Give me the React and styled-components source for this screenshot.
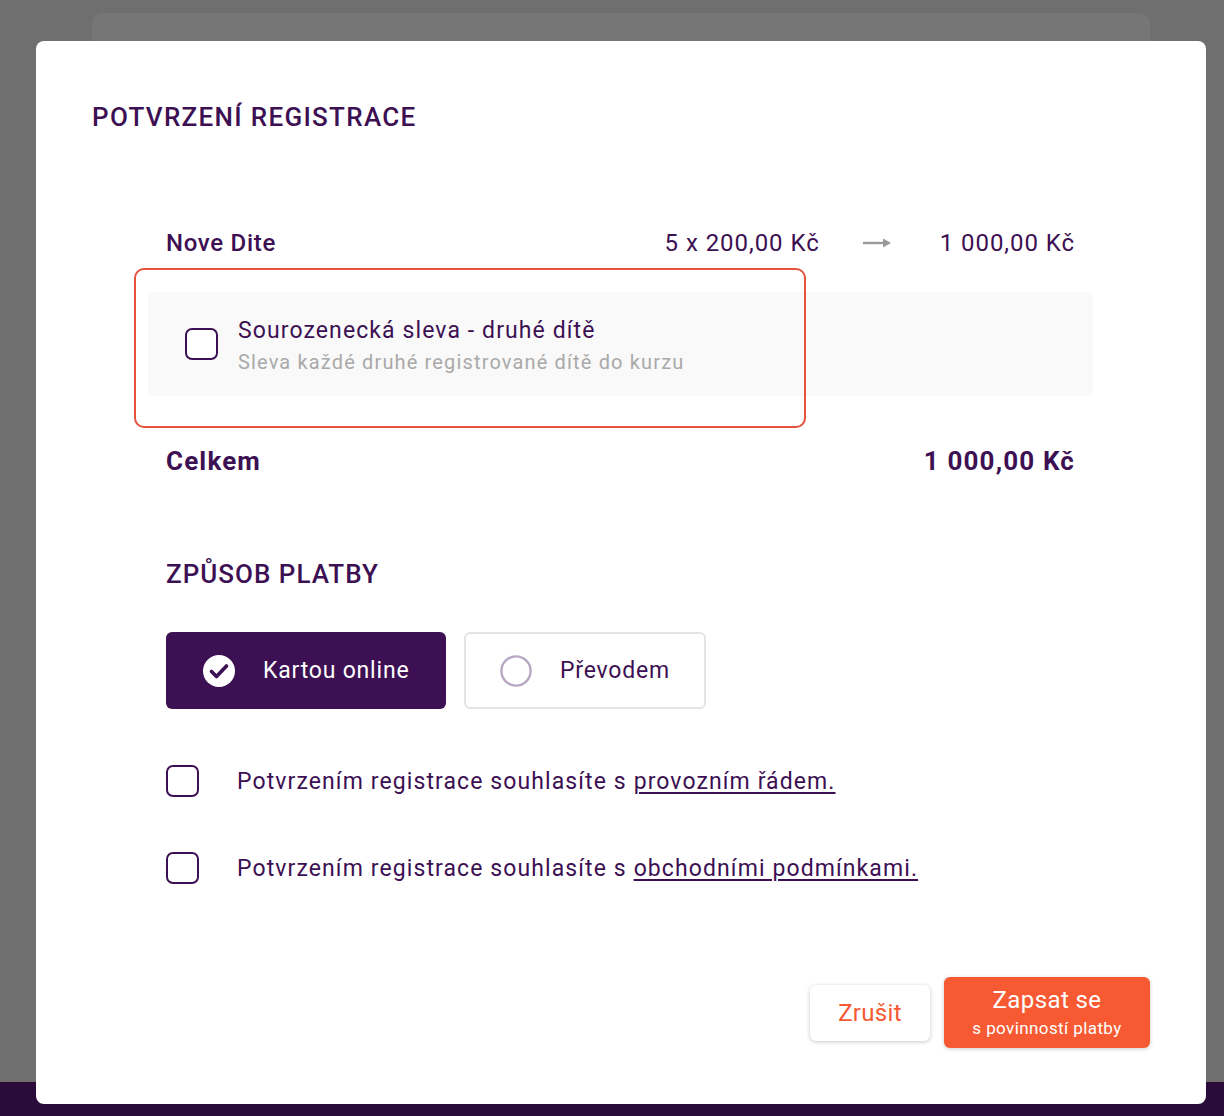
import React from 'react';
import styled, { createGlobalStyle } from 'styled-components';

const GlobalStyle = createGlobalStyle`
    html, body {
        margin: 0;
        padding: 0;
    }
    body {
        font-family: Roboto, "Noto Sans", "Liberation Sans", sans-serif;
        color: #3c1053;
    }
`;

const PURPLE = '#3c1053';
const ORANGE = '#f75a33';

export default function App() {
    return (
        <Page>
            <GlobalStyle />
            <BehindCard />
            <BottomBand />
            <Dialog>
                <Title>POTVRZENÍ REGISTRACE</Title>
                <Body>
                    <LineRow>
                        <ItemName>Nove Dite</ItemName>
                        <ItemCalc>
                            <span>5 x 200,00 Kč</span>
                            <ArrowIcon />
                            <span>1 000,00 Kč</span>
                        </ItemCalc>
                    </LineRow>

                    <DiscountBox>
                        <Highlight />
                        <Checkbox />
                        <DiscountText>
                            <DiscountTitle>Sourozenecká sleva - druhé dítě</DiscountTitle>
                            <DiscountSub>Sleva každé druhé registrované dítě do kurzu</DiscountSub>
                        </DiscountText>
                    </DiscountBox>

                    <TotalRow>
                        <span>Celkem</span>
                        <span>1 000,00 Kč</span>
                    </TotalRow>

                    <SectionTitle>ZPŮSOB PLATBY</SectionTitle>

                    <PaymentRow>
                        <PayOption $active>
                            <CheckCircle />
                            Kartou online
                        </PayOption>
                        <PayOption>
                            <EmptyCircle />
                            Převodem
                        </PayOption>
                    </PaymentRow>

                    <AgreeRow $top={55}>
                        <Checkbox />
                        <AgreeText>
                            Potvrzením registrace souhlasíte s <a href="#">provozním řádem.</a>
                        </AgreeText>
                    </AgreeRow>
                    <AgreeRow $top={53}>
                        <Checkbox />
                        <AgreeText>
                            Potvrzením registrace souhlasíte s <a href="#">obchodními podmínkami.</a>
                        </AgreeText>
                    </AgreeRow>
                </Body>

                <Footer>
                    <CancelButton>Zrušit</CancelButton>
                    <SubmitButton>
                        <span>Zapsat se</span>
                        <small>s povinností platby</small>
                    </SubmitButton>
                </Footer>
            </Dialog>
        </Page>
    );
}

function ArrowIcon() {
    return (
        <ArrowSvg width="30" height="14" viewBox="0 0 30 14">
            <path d="M1 7h24" stroke="#9a9a9a" strokeWidth="2.4" />
            <path d="M21 2.5 29 7l-8 4.5z" fill="#9a9a9a" />
        </ArrowSvg>
    );
}

function CheckCircle() {
    return (
        <IconSvg width="32" height="32" viewBox="0 0 32 32">
            <circle cx="16" cy="16" r="16" fill="#fff" />
            <path d="M8.5 16.5 13.5 21.5 23.5 11" fill="none" stroke={PURPLE} strokeWidth="3.6" strokeLinecap="round" strokeLinejoin="round" />
        </IconSvg>
    );
}

function EmptyCircle() {
    return (
        <IconSvg width="32" height="32" viewBox="0 0 32 32">
            <circle cx="16" cy="16" r="14.6" fill="none" stroke="#b8a8c4" strokeWidth="2.4" />
        </IconSvg>
    );
}

const Page = styled.div`
    position: relative;
    height: 1116px;
    overflow: hidden;
    background: #6f6f6f;
    padding-top: 13px;
    box-sizing: border-box;
`;

const BehindCard = styled.div`
    margin: 0 74px 0 92px;
    height: 1200px;
    background: #767676;
    border-radius: 10px;
`;

const BottomBand = styled.div`
    position: absolute;
    left: 0;
    right: 0;
    bottom: 0;
    height: 34px;
    background: #2b0b3a;
`;

const Dialog = styled.div`
    position: absolute;
    top: 41px;
    left: 36px;
    width: 1170px;
    height: 1063px;
    box-sizing: border-box;
    background: #fff;
    border-radius: 8px;
    padding: 60px 56px 56px;
    display: flex;
    flex-direction: column;
`;

const Title = styled.h2`
    margin: 0;
    font-size: 26px;
    line-height: 32px;
    font-weight: 500;
    letter-spacing: 1.3px;
    color: ${PURPLE};
`;

const Body = styled.div`
    margin: 0 75px 0 74px;
    display: flex;
    flex-direction: column;
`;

const LineRow = styled.div`
    margin-top: 94px;
    display: flex;
    justify-content: space-between;
    align-items: center;
    height: 32px;
    font-size: 24px;
    letter-spacing: 0.95px;
`;

const ItemName = styled.span`
    font-weight: 500;
    letter-spacing: 0.7px;
`;

const ItemCalc = styled.div`
    display: flex;
    align-items: center;

    & > span:first-child {
        margin-right: 42px;
    }
    & > span:last-child {
        margin-left: 48px;
    }
`;

const ArrowSvg = styled.svg`
    display: block;
`;

const DiscountBox = styled.div`
    position: relative;
    margin: 33px -18px 0;
    height: 104px;
    box-sizing: border-box;
    padding: 0 37px;
    background: #f9f9f9;
    border-radius: 8px;
    display: flex;
    align-items: center;
    gap: 20px;
`;

const Highlight = styled.div`
    position: absolute;
    left: -14px;
    top: -24px;
    width: 672px;
    height: 160px;
    box-sizing: border-box;
    border: 2.5px solid #e5533d;
    border-radius: 10px;
    pointer-events: none;
`;

const Checkbox = styled.span`
    flex: none;
    width: 33px;
    height: 32px;
    box-sizing: border-box;
    border: 2.5px solid ${PURPLE};
    border-radius: 7px;
    background: #fff;
`;

const DiscountText = styled.div`
    display: flex;
    flex-direction: column;
    margin-top: 4px;
`;

const DiscountTitle = styled.span`
    font-size: 23px;
    line-height: 32px;
    letter-spacing: 1.1px;
`;

const DiscountSub = styled.span`
    font-size: 20px;
    line-height: 30px;
    letter-spacing: 1.15px;
    color: #a9a9a9;
`;

const TotalRow = styled.div`
    margin-top: 49px;
    display: flex;
    justify-content: space-between;
    align-items: center;
    height: 32px;
    font-size: 26px;
    font-weight: 700;
    letter-spacing: 1.15px;
`;

const SectionTitle = styled.h3`
    margin: 81px 0 0;
    font-size: 26px;
    line-height: 32px;
    font-weight: 500;
    letter-spacing: 1px;
`;

const PaymentRow = styled.div`
    margin-top: 42px;
    display: flex;
    gap: 18px;
`;

const PayOption = styled.button`
    height: 77px;
    box-sizing: border-box;
    display: flex;
    align-items: center;
    gap: 28px;
    padding: 0 30px 0 ${p => (p.$active ? 37 : 34)}px;
    font-family: inherit;
    font-size: 23px;
    letter-spacing: 0.8px;
    border-radius: 6px;
    cursor: pointer;
    background: ${p => (p.$active ? PURPLE : '#fff')};
    color: ${p => (p.$active ? '#fff' : PURPLE)};
    border: ${p => (p.$active ? 'none' : '2px solid #e4e4e4')};
    width: ${p => (p.$active ? 280 : 242)}px;
`;

const IconSvg = styled.svg`
    display: block;
    flex: none;
`;

const AgreeRow = styled.label`
    margin-top: ${p => p.$top}px;
    display: flex;
    align-items: center;
    gap: 38px;
    height: 34px;
`;

const AgreeText = styled.span`
    font-size: 23px;
    letter-spacing: 1.1px;

    a {
        color: inherit;
        text-decoration: underline;
        text-decoration-thickness: 1.5px;
        text-underline-offset: 3px;
    }
`;

const Footer = styled.div`
    margin-top: auto;
    display: flex;
    justify-content: flex-end;
    align-items: center;
    gap: 14px;
`;

const CancelButton = styled.button`
    width: 120px;
    height: 56px;
    border: none;
    border-radius: 6px;
    background: #fff;
    box-shadow: 0 1px 4px rgba(0, 0, 0, 0.22);
    color: ${ORANGE};
    font-family: inherit;
    font-size: 24px;
    letter-spacing: 0.3px;
    cursor: pointer;
`;

const SubmitButton = styled.button`
    width: 206px;
    height: 71px;
    border: none;
    border-radius: 6px;
    background: ${ORANGE};
    box-shadow: 0 1px 4px rgba(0, 0, 0, 0.2);
    color: #fff;
    font-family: inherit;
    display: flex;
    flex-direction: column;
    align-items: center;
    justify-content: center;
    cursor: pointer;

    span {
        font-size: 24px;
        line-height: 30px;
        letter-spacing: 0.4px;
    }
    small {
        font-size: 17px;
        line-height: 26px;
        letter-spacing: 0.4px;
    }
`;
